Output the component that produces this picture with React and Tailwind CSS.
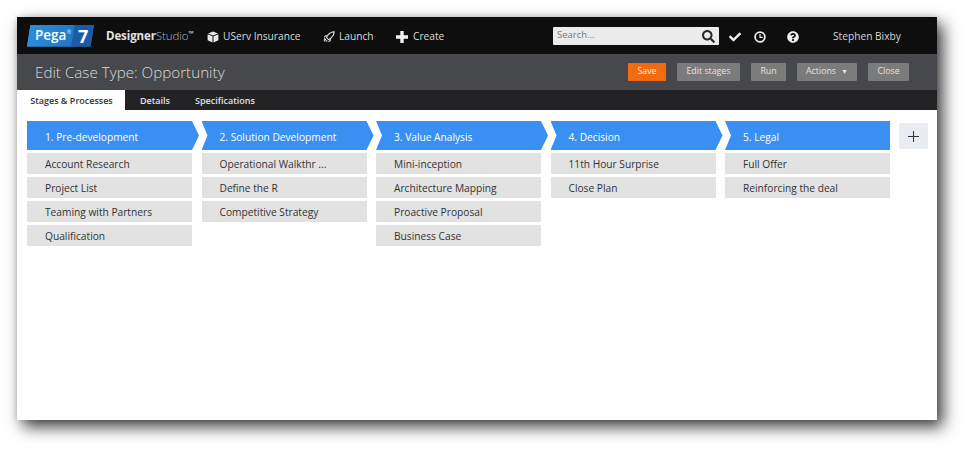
import React from "react";
import { FaSearch, FaCheck, FaQuestionCircle } from "react-icons/fa";

const stages = [
  { title: "1. Pre-development", items: ["Account Research", "Project List", "Teaming with Partners", "Qualification"], kind: "first" },
  { title: "2. Solution Development", items: ["Operational Walkthr ...", "Define the R", "Competitive Strategy"], kind: "mid" },
  { title: "3. Value Analysis", items: ["Mini-inception", "Architecture Mapping", "Proactive Proposal", "Business Case"], kind: "mid" },
  { title: "4. Decision", items: ["11th Hour Surprise", "Close Plan"], kind: "mid" },
  { title: "5. Legal", items: ["Full Offer", "Reinforcing the deal"], kind: "last" },
];

function Cube() {
  return (
    <svg viewBox="0 0 12 12" className="w-[12px] h-[12px] mt-[2px]" fill="#e8e8e8">
      <path d="M6 .5 11 2.400 6 4.400 1 2.400Z" />
      <path d="M.6 3.300 5.500 5.300V11.500L.6 9.300Z" />
      <path d="M11.400 3.300 6.500 5.300V11.500L11.400 9.300Z" />
    </svg>
  );
}

function Rocket() {
  return (
    <svg viewBox="0 0 14 14" className="w-[12px] h-[12px] mt-[2px]" fill="none" stroke="#e6e6e6" strokeWidth="1.200">
      <path d="M13 1C10 1 7.500 2.500 5.500 5L4 7.500l2.500 2.500L9 8.500C11.500 6.500 13 4 13 1Z" />
      <path d="M5 5.500H3L1.500 7.500M8.500 9v2L6.500 12.500M3.500 9.500 1 12M5 11 3.500 12.500M2.500 8.500 1 10" />
    </svg>
  );
}

function Cross() {
  return (
    <svg viewBox="0 0 12 12" className="w-[12px] h-[12px] mt-[2px]" fill="#f0f0f0">
      <path d="M4.300 0h3.400v4.300H12v3.400H7.700V12H4.300V7.700H0V4.300h4.300Z" />
    </svg>
  );
}

function Clock() {
  return (
    <svg viewBox="0 0 12 12" className="ml-[13px] w-[12px] h-[12px] mt-[2px]" fill="none" stroke="#eeeeee">
      <circle cx="6" cy="6" r="4.900" strokeWidth="1.800" />
      <path d="M6 3v3.300H8.800" strokeWidth="1.200" />
    </svg>
  );
}

function Btn({ children, className = "" }) {
  return (
    <div className={`h-[18px] flex items-center justify-center rounded-[1px] text-[8.8px] text-[#e4e4e4] ${className}`}>
      {children}
    </div>
  );
}

export default function App() {
  return (
    <div className="w-[970px] h-[453px] bg-white pt-[17px] pl-[17px] overflow-hidden font-['Open_Sans',sans-serif]">
      <div className="w-[920px] h-[403px] bg-white flex flex-col shadow-[6px_7px_15px_rgba(0,0,0,0.75),0_0_7px_rgba(0,0,0,0.15)]">
        {/* Top bar */}
        <div className="h-[37px] bg-[#0e0e0e] flex items-center text-[#dcdcdc] text-[10.2px] shrink-0">
          <div className="ml-[10px] w-[67px] h-[22px] flex bg-[#2a86d6] [clip-path:polygon(3.500px_0,100%_0,calc(100%-3.500px)_100%,0_100%)]">
            <div className="w-[49px] shrink-0 pl-[8px] flex items-center text-[13.500px] font-semibold text-white bg-[linear-gradient(100deg,#2f90dc,#1f74c4)] leading-none">
              Pega<span className="text-[6px] mb-[7px] text-[#bfe0ff]">®</span>
            </div>
            <div className="-ml-[5px] flex-1 flex items-center pl-[7px] text-[18px] leading-none font-bold text-white bg-[#1c5aa6] [clip-path:polygon(4px_0,100%_0,100%_100%,0_100%)]">7</div>
          </div>
          <div className="ml-[12px] w-[101px] pt-[1px] text-[11.500px] whitespace-nowrap text-[#e2e2e2] tracking-[-0.1px]">
            <span className="font-bold">Designer</span><span className="font-light text-[#b5b5b5]">Studio</span><span className="text-[7px] align-[4px]">™</span>
          </div>
          <Cube />
          <span className="ml-[4px] w-[100px] pt-[2px]">UServ Insurance</span>
          <Rocket />
          <span className="ml-[4px] w-[57px] pt-[2px]">Launch</span>
          <Cross />
          <span className="ml-[5px] w-[140px] pt-[2px]">Create</span>
          <div className="w-[166px] h-[18px] bg-[#ebebeb] rounded-[1px] flex items-center justify-between pl-[4px] pr-[4px] text-[9.5px] text-[#777]">
            <span>Search...</span>
            <FaSearch className="w-[13px] h-[13px] text-[#2a2a2a] mt-[2px]" />
          </div>
          <FaCheck className="ml-[10px] w-[12px] h-[12px] mt-[2px] text-[#eeeeee]" />
          <Clock />
          <FaQuestionCircle className="ml-[21px] w-[12px] h-[12px] mt-[2px] text-[#eeeeee]" />
          <span className="ml-[34px] pt-[2px] text-[#d6d6d6]">Stephen Bixby</span>
        </div>

        {/* Title bar */}
        <div className="h-[36px] bg-[#47484b] flex items-center pl-[18px] shrink-0">
          <div className="w-[593px] text-[15.200px] text-[#dadada] font-light whitespace-nowrap">Edit Case Type: Opportunity</div>
          <div className="flex gap-[11px]">
            <Btn className="w-[38px] bg-[#f26a12] text-[#ffe9d8]">Save</Btn>
            <Btn className="w-[63px] bg-[#7b7b7b]">Edit stages</Btn>
            <Btn className="w-[35px] bg-[#7b7b7b]">Run</Btn>
            <Btn className="w-[60px] bg-[#7b7b7b]">Actions<span className="ml-[5px] text-[7px]">▼</span></Btn>
            <Btn className="w-[41px] bg-[#7b7b7b]">Close</Btn>
          </div>
        </div>

        {/* Tabs */}
        <div className="h-[20px] bg-[#232325] flex text-[9px] font-semibold text-[#e0e0e0] shrink-0">
          <div className="w-[108px] pl-[1px] bg-white text-[#333] flex items-center justify-center pt-[1px]">Stages &amp; Processes</div>
          <div className="ml-[15px] flex items-center pt-[1px]">Details</div>
          <div className="ml-[25px] flex items-center pt-[1px]">Specifications</div>
        </div>

        {/* Stages */}
        <div className="flex pt-[11px] pl-[10px]">
          <div className="flex gap-[9.5px]">
            {stages.map((s) => (
              <div key={s.title} className="w-[165px]">
                <div
                  className={`h-[29px] flex items-center bg-[#3a8ff2] text-white text-[10.2px] pl-[18px] pt-[4px] whitespace-nowrap ${
                    s.kind === "first"
                      ? "w-[172px] [clip-path:polygon(0_0,165px_0,172px_50%,165px_100%,0_100%)]"
                      : s.kind === "mid"
                      ? "w-[172px] [clip-path:polygon(0_0,165px_0,172px_50%,165px_100%,0_100%,6px_50%)]"
                      : "w-[165px] [clip-path:polygon(0_0,100%_0,100%_100%,0_100%,6px_50%)]"
                  }`}
                >
                  {s.title}
                </div>
                <div className="mt-[3px] flex flex-col gap-[3px]">
                  {s.items.map((it) => (
                    <div key={it} className="h-[21px] bg-[#e2e2e2] flex items-center pl-[18px] pt-[2px] text-[10.2px] text-[#333] whitespace-nowrap">
                      {it}
                    </div>
                  ))}
                </div>
              </div>
            ))}
          </div>
          <div className="ml-[9px] mt-[2px] w-[29px] h-[26px] bg-[#e9edf1] flex items-center justify-center">
            <svg viewBox="0 0 12 12" className="w-[11px] h-[11px]" stroke="#333" strokeWidth="1.100">
              <path d="M6 0v12M0 6h12" />
            </svg>
          </div>
        </div>
      </div>
    </div>
  );
}
